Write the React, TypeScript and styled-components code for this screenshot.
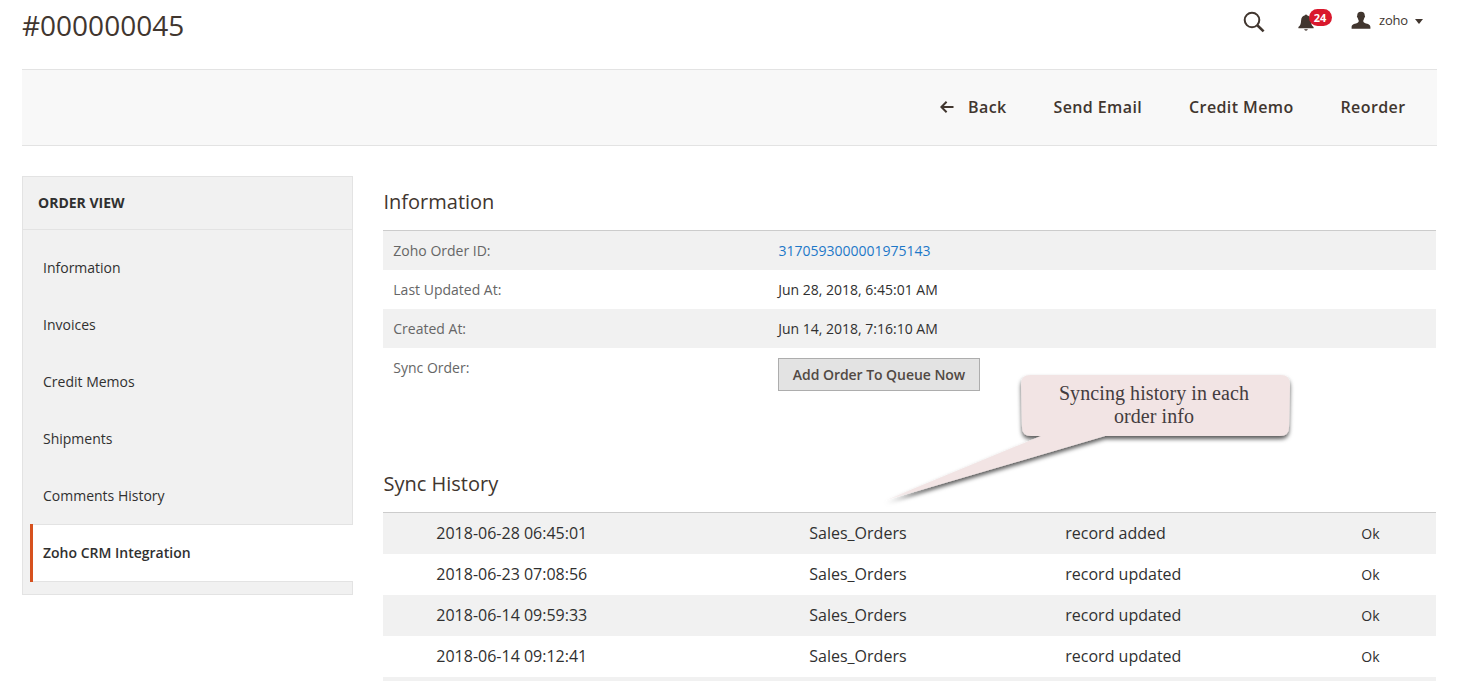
import React from "react";
import styled, { createGlobalStyle } from "styled-components";

const GlobalStyle = createGlobalStyle`
  * { box-sizing: border-box; }
  body {
    margin: 0;
    background: #fff;
    color: #303030;
    font-family: "Open Sans", "Liberation Sans", sans-serif;
    font-size: 14px;
    line-height: 19px;
    overflow: hidden;
  }
`;

const Page = styled.div`
  position: relative;
  height: 681px;
  padding: 0 21px 0 22px;
  overflow: hidden;
`;

const Header = styled.header`
  display: flex;
  justify-content: space-between;
  height: 69px;
`;

const Title = styled.h1`
  margin: 6px 0 0;
  font-size: 28px;
  font-weight: 400;
  line-height: 38px;
  color: #41362f;
`;

const HeaderTools = styled.div`
  display: flex;
  align-items: flex-start;
  padding-right: 14px;
  color: #41362f;
`;

const SearchIcon = styled.svg`
  width: 22px;
  height: 22px;
  margin: 11px 33px 0 0;
`;

const Notifications = styled.div`
  position: relative;
  width: 35px;
  height: 34px;
  margin-right: 18px;
`;

const BellIcon = styled.svg`
  display: block;
  width: 16px;
  height: 18px;
  margin-top: 14px;
`;

const Badge = styled.span`
  position: absolute;
  top: 9px;
  left: 11px;
  width: 23px;
  height: 17px;
  border-radius: 9px;
  background: #d9182d;
  color: #fff;
  font-size: 11px;
  font-weight: 700;
  line-height: 17px;
  text-align: center;
`;

const UserMenu = styled.div`
  display: flex;
  align-items: center;
  height: 18px;
  margin-top: 11px;
`;

const UserIcon = styled.svg`
  width: 20px;
  height: 18px;
`;

const UserName = styled.span`
  margin-left: 8.5px;
  font-size: 13px;
  line-height: 18px;
  letter-spacing: -0.2px;
`;

const Caret = styled.svg`
  width: 8px;
  height: 5px;
  margin: 2px 0 0 7px;
`;

const Toolbar = styled.div`
  display: flex;
  align-items: center;
  justify-content: flex-end;
  gap: 46.9px;
  height: 77px;
  padding: 0 31.5px 2px 0;
  border-top: 1px solid #e3e3e3;
  border-bottom: 1px solid #e3e3e3;
  background: #f8f8f8;
`;

const ToolbarAction = styled.a`
  display: flex;
  align-items: center;
  font-size: 16px;
  font-weight: 600;
  line-height: 22px;
  letter-spacing: 0.4px;
  color: #41362f;
`;

const ArrowIcon = styled.svg`
  width: 14px;
  height: 12px;
  margin-right: 14px;
`;

const Columns = styled.div`
  display: flex;
  align-items: flex-start;
  gap: 30px;
  padding: 30px 1px 0 0;
`;

const Sidebar = styled.nav`
  flex: none;
  width: 331px;
  height: 419px;
  border: 1px solid #e3e3e3;
  background: #f1f1f1;
`;

const SidebarTitle = styled.div`
  height: 53px;
  padding: 16px 15px 0;
  border-bottom: 1px solid #e3e3e3;
  font-weight: 700;
  line-height: 19px;
  color: #303030;
`;

const SidebarList = styled.div`
  display: flex;
  flex-direction: column;
  padding: 9px 0 0 7px;
`;

const SidebarItem = styled.a<{ $active?: boolean }>`
  display: flex;
  align-items: center;
  height: ${(p) => (p.$active ? 58 : 57)}px;
  margin-right: ${(p) => (p.$active ? -1 : 0)}px;
  padding-left: ${(p) => (p.$active ? 10 : 13)}px;
  padding-bottom: ${(p) => (p.$active ? 2 : 0)}px;
  font-weight: ${(p) => (p.$active ? 600 : 400)};
  color: #303030;
  ${(p) =>
    p.$active &&
    `
    background: #fff;
    box-shadow: inset 0 1px #e3e3e3, inset 0 -1px #e3e3e3;
    border-left: 3px solid #d6511e;
  `}
`;

const Main = styled.main`
  flex: 1;
  min-width: 0;
  padding-top: 12px;
`;

const Section = styled.section<{ $height?: number }>`
  height: ${(p) => (p.$height ? `${p.$height}px` : "auto")};
`;

const SectionTitle = styled.h2`
  margin: 0;
  height: 42px;
  padding-left: 0.5px;
  font-size: 20px;
  font-weight: 400;
  line-height: 27px;
  color: #41362f;
`;

const Rows = styled.div`
  border-top: 1px solid #ccc;
`;

const InfoRow = styled.div<{ $shaded?: boolean }>`
  display: grid;
  grid-template-columns: 385px 1fr;
  align-items: start;
  min-height: 39px;
  padding: 10px;
  background: ${(p) => (p.$shaded ? "#f1f1f1" : "#fff")};
`;

const Label = styled.span`
  padding-left: 0.3px;
  color: #666;
`;

const Value = styled.span`
  padding-left: 0.2px;
  color: #303030;
`;

const OrderLink = styled.a`
  padding-left: 0.4px;
  color: #1e78c8;
`;

const QueueButton = styled.button`
  justify-self: start;
  width: 202px;
  height: 33px;
  padding: 0;
  border: 1px solid #adadad;
  border-radius: 0;
  background: #e3e3e3;
  color: #514943;
  font: 600 14px/19px "Open Sans", sans-serif;
  letter-spacing: -0.05px;
`;

const HistoryRow = styled.div<{ $shaded?: boolean }>`
  display: grid;
  grid-template-columns: 373px 256px 296px 1fr;
  align-items: center;
  height: 41px;
  padding-left: 53.3px;
  font-size: 16px;
  background: ${(p) => (p.$shaded ? "#f1f1f1" : "#fff")};
`;

const Status = styled.span`
  font-size: 14px;
`;

const Callout = styled.div`
  position: absolute;
  left: 880px;
  top: 368px;
  width: 420px;
  height: 145px;
`;

const CalloutShape = styled.svg`
  position: absolute;
  inset: 0;
  width: 420px;
  height: 145px;
`;

const CalloutText = styled.p`
  position: absolute;
  top: 14px;
  left: 144px;
  width: 260px;
  margin: 0;
  font-family: "Liberation Serif", serif;
  font-size: 20px;
  line-height: 23px;
  letter-spacing: 0.08px;
  text-align: center;
  color: #443c40;
`;

const sidebarItems = [
  "Information",
  "Invoices",
  "Credit Memos",
  "Shipments",
  "Comments History",
  "Zoho CRM Integration",
];

const history = [
  ["2018-06-28 06:45:01", "Sales_Orders", "record added", "Ok"],
  ["2018-06-23 07:08:56", "Sales_Orders", "record updated", "Ok"],
  ["2018-06-14 09:59:33", "Sales_Orders", "record updated", "Ok"],
  ["2018-06-14 09:12:41", "Sales_Orders", "record updated", "Ok"],
];

export default function App() {
  return (
    <Page>
      <GlobalStyle />
      <Header>
        <Title>#000000045</Title>
        <HeaderTools>
          <SearchIcon viewBox="0 0 22 22" fill="none" stroke="currentColor">
            <circle cx="9" cy="9" r="7.3" strokeWidth="2" />
            <path d="M14.3 14.3L20.6 20.4" strokeWidth="2.6" />
          </SearchIcon>
          <Notifications>
            <BellIcon viewBox="0 0 16 18" fill="currentColor">
              <path d="M7 1.2C7 .3 9 .3 9 1.2C11.6 1.8 12.7 3.8 12.9 6.4C13.1 9.6 13.4 11 15.6 13V14.2H.4V13C2.6 11 2.9 9.6 3.1 6.4C3.3 3.8 4.4 1.8 7 1.2Z" />
              <path d="M6.2 15.3H9.8C9.6 17.2 6.4 17.2 6.2 15.3Z" />
            </BellIcon>
            <Badge>24</Badge>
          </Notifications>
          <UserMenu>
            <UserIcon viewBox="0 0 20 18" fill="currentColor">
              <path d="M10 .8C12.6 .8 13.9 2.2 13.7 4.6C14.4 4.9 14 6.6 13.3 6.9C13 8.2 12.6 9 12.3 9.5C12.2 10.9 12.6 11.4 13.8 11.9C17.2 13 19.4 13.3 19.4 16V17.8H.6V16C.6 13.3 2.8 13 6.2 11.9C7.4 11.4 7.8 10.9 7.7 9.5C7.4 9 7 8.2 6.7 6.9C6 6.6 5.6 4.9 6.3 4.6C6.1 2.2 7.4 .8 10 .8Z" />
            </UserIcon>
            <UserName>zoho</UserName>
            <Caret viewBox="0 0 8 5" fill="currentColor">
              <path d="M0 0H8L4 5Z" />
            </Caret>
          </UserMenu>
        </HeaderTools>
      </Header>

      <Toolbar>
        <ToolbarAction>
          <ArrowIcon viewBox="0 0 14 12" fill="none" stroke="currentColor" strokeWidth="2">
            <path d="M13.5 6H1.8M6.6 .8L1.4 6L6.6 11.2" />
          </ArrowIcon>
          Back
        </ToolbarAction>
        <ToolbarAction>Send Email</ToolbarAction>
        <ToolbarAction>Credit Memo</ToolbarAction>
        <ToolbarAction>Reorder</ToolbarAction>
      </Toolbar>

      <Columns>
        <Sidebar>
          <SidebarTitle>ORDER VIEW</SidebarTitle>
          <SidebarList>
            {sidebarItems.map((item, i) => (
              <SidebarItem key={item} $active={i === sidebarItems.length - 1}>
                {item}
              </SidebarItem>
            ))}
          </SidebarList>
        </Sidebar>

        <Main>
          <Section $height={282}>
            <SectionTitle>Information</SectionTitle>
            <Rows>
              <InfoRow $shaded>
                <Label>Zoho Order ID:</Label>
                <OrderLink>3170593000001975143</OrderLink>
              </InfoRow>
              <InfoRow>
                <Label>Last Updated At:</Label>
                <Value>Jun 28, 2018, 6:45:01 AM</Value>
              </InfoRow>
              <InfoRow $shaded>
                <Label>Created At:</Label>
                <Value>Jun 14, 2018, 7:16:10 AM</Value>
              </InfoRow>
              <InfoRow>
                <Label>Sync Order:</Label>
                <QueueButton>Add Order To Queue Now</QueueButton>
              </InfoRow>
            </Rows>
          </Section>
          <Section>
            <SectionTitle>Sync History</SectionTitle>
            <Rows>
              {history.map(([time, entity, action, status], i) => (
                <HistoryRow key={time} $shaded={i % 2 === 0}>
                  <span>{time}</span>
                  <span>{entity}</span>
                  <span>{action}</span>
                  <Status>{status}</Status>
                </HistoryRow>
              ))}
              <HistoryRow $shaded />
            </Rows>
          </Section>
        </Main>
      </Columns>

      <Callout>
        <CalloutShape viewBox="0 0 420 145">
          <defs>
            <filter id="callout-shadow" x="-5%" y="-10%" width="110%" height="125%">
              <feDropShadow dx="0" dy="3" stdDeviation="2" floodColor="#000" floodOpacity="0.65" />
            </filter>
            <linearGradient id="callout-fill" gradientUnits="userSpaceOnUse" x1="4" y1="0" x2="32" y2="0">
              <stop offset="0" stopColor="#f2e4e4" stopOpacity="0.2" />
              <stop offset="1" stopColor="#f2e4e4" />
            </linearGradient>
          </defs>
          <path
            filter="url(#callout-shadow)"
            fill="url(#callout-fill)"
            d="M150 7H401Q410 7 410 16L409 59Q409 68 400 68H225L5 132.5L161 68H151Q142 68 142 59L141 16Q141 7 150 7Z"
          />
        </CalloutShape>
        <CalloutText>
          Syncing history in each
          <br />
          order info
        </CalloutText>
      </Callout>
    </Page>
  );
}
